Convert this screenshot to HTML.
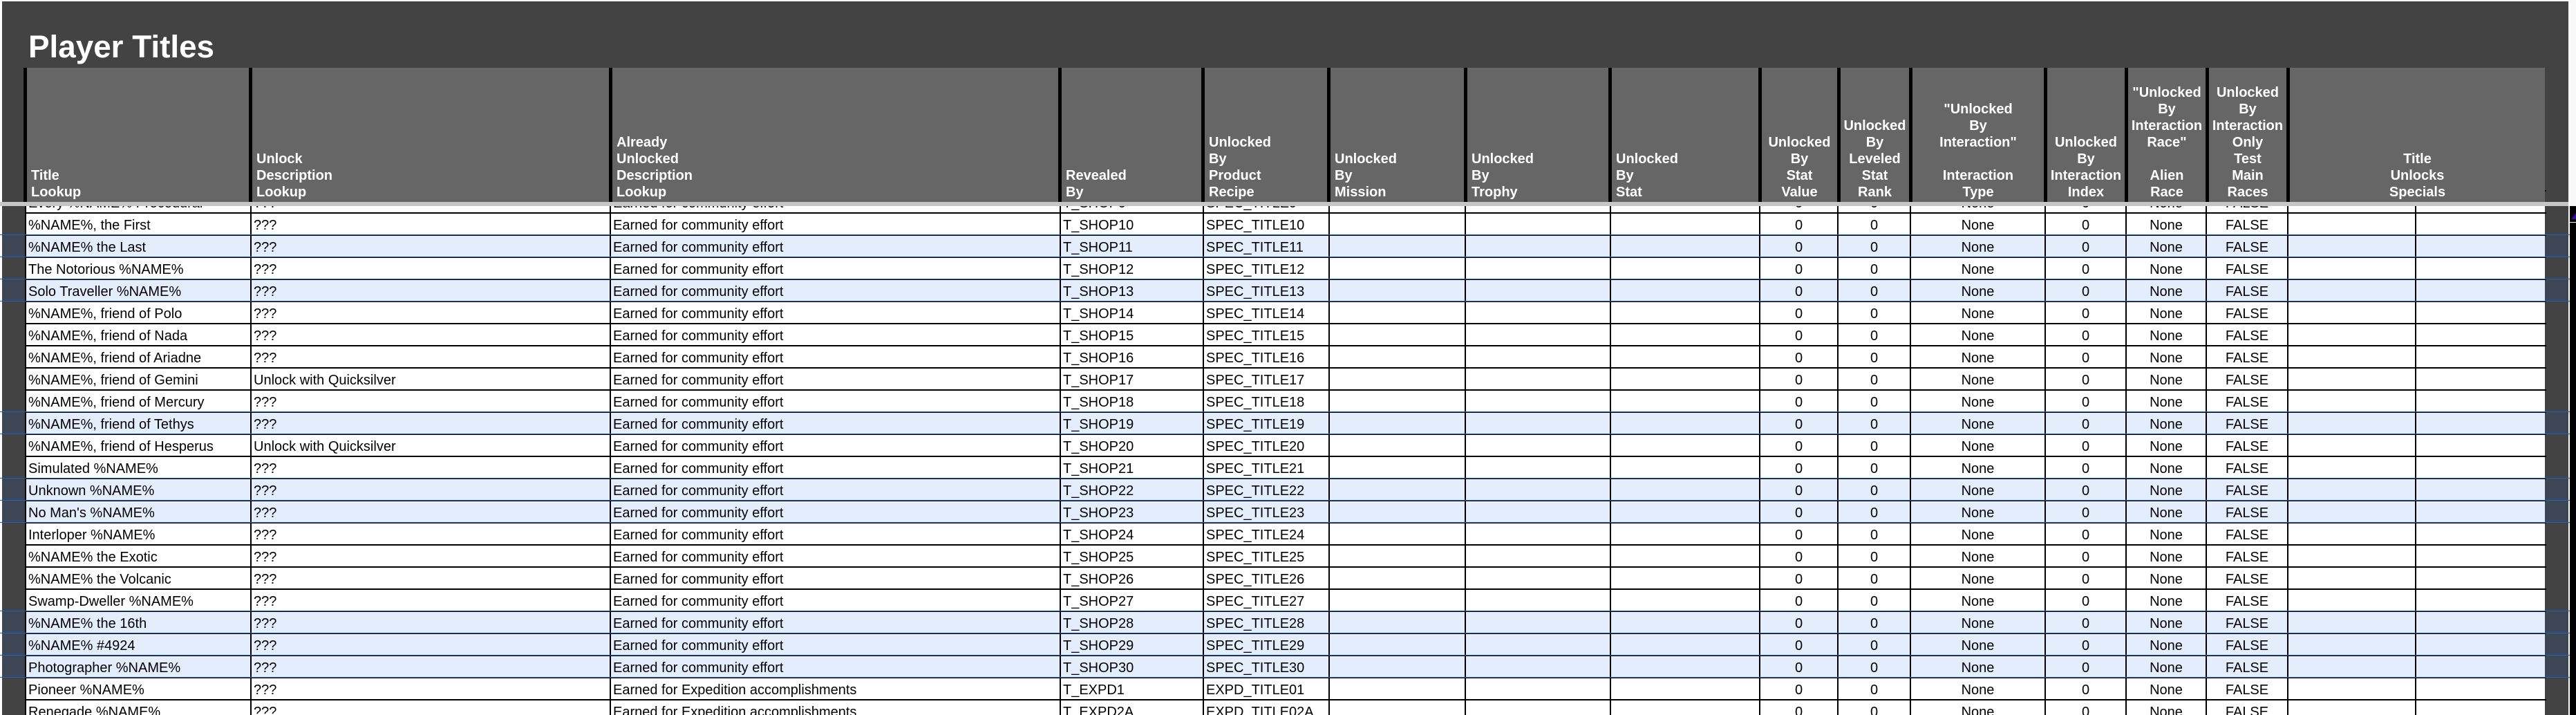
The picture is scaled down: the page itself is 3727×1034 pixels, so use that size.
<!DOCTYPE html>
<html lang="en">
<head>
<meta charset="utf-8">
<title>Player Titles</title>
<style>
html,body{margin:0;padding:0;background:#fff;width:3727px;height:1034px;overflow:hidden;}
#page{position:relative;width:3727px;height:1034px;overflow:hidden;font-family:"Liberation Sans",Arial,sans-serif;font-size:20px;line-height:24px;color:#000;}
.abs{position:absolute;}
#bg{left:3px;top:2px;width:3713px;height:1032px;background:#434343;}
#sb-top{left:3719px;top:0;width:8px;height:298px;background:#f8f8f8;}
#sb{left:3718px;top:298px;width:9px;height:736px;background:#000;}
#sb-sep{left:3718px;top:321px;width:9px;height:1px;background:#fff;}
#tri{left:3718px;top:298px;}
table{border-collapse:separate;border-spacing:0;table-layout:fixed;position:absolute;}
#data{left:36px;top:275px;width:3648px;}
#data td{height:32px;box-sizing:border-box;border-top:2px solid #000;border-left:2px solid #000;background:#fff;vertical-align:bottom;padding:0 0 1px 3px;white-space:nowrap;overflow:hidden;}
#data td:nth-child(n+9):nth-child(-n+14){text-align:center;padding-left:0;}
#data tr.h td{background:#e3edfc;}
#data td:last-child{background:linear-gradient(to right,#fff 186px,#434343 186px);}
#data tr.h td:last-child{background:linear-gradient(to right,#e3edfc 186px,#3e4656 186px);}
.t{left:3px;width:33px;height:32px;background:#3e4656;}
.r{left:3682px;width:34px;height:32px;background:#3e4656;}
.b{left:0;width:3718px;height:1px;background:#1a62cc;}
#head{left:34px;top:98px;width:3648px;}
#head td{height:194px;box-sizing:border-box;background:#666;border-left:5px solid #000;color:#fff;font-weight:bold;vertical-align:bottom;padding:0 0 2px 6px;white-space:nowrap;}
#head td.c{text-align:center;padding-left:0;}
#bar{left:0;top:292px;width:3716px;height:6px;background:#c6c6c6;}
#title{left:41px;top:41px;font-size:45.8px;line-height:54px;font-weight:bold;color:#fff;white-space:nowrap;}
</style>
</head>
<body>
<div id="page">
<div class="abs" id="bg"></div>
<div class="abs" id="sb-top"></div>
<div class="abs" id="sb"></div>
<div class="abs" id="sb-sep"></div>
<svg class="abs" id="tri" width="9" height="23" viewBox="0 0 9 23"><polygon points="2,19 9,10 9,19" fill="#3a0ca3"/></svg>

<div class="abs t" style="top:339px"></div><div class="abs r" style="top:339px"></div>
<div class="abs t" style="top:403px"></div><div class="abs r" style="top:403px"></div>
<div class="abs t" style="top:595px"></div><div class="abs r" style="top:595px"></div>
<div class="abs t" style="top:691px"></div><div class="abs r" style="top:691px"></div>
<div class="abs t" style="top:723px"></div><div class="abs r" style="top:723px"></div>
<div class="abs t" style="top:883px"></div><div class="abs r" style="top:883px"></div>
<div class="abs t" style="top:915px"></div><div class="abs r" style="top:915px"></div>
<div class="abs t" style="top:947px"></div><div class="abs r" style="top:947px"></div>

<table id="data">
<colgroup><col style="width:326px"><col style="width:520px"><col style="width:651px"><col style="width:207px"><col style="width:182px"><col style="width:197px"><col style="width:210px"><col style="width:216px"><col style="width:113px"><col style="width:105px"><col style="width:195px"><col style="width:117px"><col style="width:116px"><col style="width:118px"><col style="width:185px"><col style="width:190px"></colgroup>
<tr><td>Every %NAME% Procedural</td><td>???</td><td>Earned for community effort</td><td>T_SHOP9</td><td>SPEC_TITLE9</td><td></td><td></td><td></td><td>0</td><td>0</td><td>None</td><td>0</td><td>None</td><td>FALSE</td><td></td><td></td></tr>
<tr><td>%NAME%, the First</td><td>???</td><td>Earned for community effort</td><td>T_SHOP10</td><td>SPEC_TITLE10</td><td></td><td></td><td></td><td>0</td><td>0</td><td>None</td><td>0</td><td>None</td><td>FALSE</td><td></td><td></td></tr>
<tr class="h"><td>%NAME% the Last</td><td>???</td><td>Earned for community effort</td><td>T_SHOP11</td><td>SPEC_TITLE11</td><td></td><td></td><td></td><td>0</td><td>0</td><td>None</td><td>0</td><td>None</td><td>FALSE</td><td></td><td></td></tr>
<tr><td>The Notorious %NAME%</td><td>???</td><td>Earned for community effort</td><td>T_SHOP12</td><td>SPEC_TITLE12</td><td></td><td></td><td></td><td>0</td><td>0</td><td>None</td><td>0</td><td>None</td><td>FALSE</td><td></td><td></td></tr>
<tr class="h"><td>Solo Traveller %NAME%</td><td>???</td><td>Earned for community effort</td><td>T_SHOP13</td><td>SPEC_TITLE13</td><td></td><td></td><td></td><td>0</td><td>0</td><td>None</td><td>0</td><td>None</td><td>FALSE</td><td></td><td></td></tr>
<tr><td>%NAME%, friend of Polo</td><td>???</td><td>Earned for community effort</td><td>T_SHOP14</td><td>SPEC_TITLE14</td><td></td><td></td><td></td><td>0</td><td>0</td><td>None</td><td>0</td><td>None</td><td>FALSE</td><td></td><td></td></tr>
<tr><td>%NAME%, friend of Nada</td><td>???</td><td>Earned for community effort</td><td>T_SHOP15</td><td>SPEC_TITLE15</td><td></td><td></td><td></td><td>0</td><td>0</td><td>None</td><td>0</td><td>None</td><td>FALSE</td><td></td><td></td></tr>
<tr><td>%NAME%, friend of Ariadne</td><td>???</td><td>Earned for community effort</td><td>T_SHOP16</td><td>SPEC_TITLE16</td><td></td><td></td><td></td><td>0</td><td>0</td><td>None</td><td>0</td><td>None</td><td>FALSE</td><td></td><td></td></tr>
<tr><td>%NAME%, friend of Gemini</td><td>Unlock with Quicksilver</td><td>Earned for community effort</td><td>T_SHOP17</td><td>SPEC_TITLE17</td><td></td><td></td><td></td><td>0</td><td>0</td><td>None</td><td>0</td><td>None</td><td>FALSE</td><td></td><td></td></tr>
<tr><td>%NAME%, friend of Mercury</td><td>???</td><td>Earned for community effort</td><td>T_SHOP18</td><td>SPEC_TITLE18</td><td></td><td></td><td></td><td>0</td><td>0</td><td>None</td><td>0</td><td>None</td><td>FALSE</td><td></td><td></td></tr>
<tr class="h"><td>%NAME%, friend of Tethys</td><td>???</td><td>Earned for community effort</td><td>T_SHOP19</td><td>SPEC_TITLE19</td><td></td><td></td><td></td><td>0</td><td>0</td><td>None</td><td>0</td><td>None</td><td>FALSE</td><td></td><td></td></tr>
<tr><td>%NAME%, friend of Hesperus</td><td>Unlock with Quicksilver</td><td>Earned for community effort</td><td>T_SHOP20</td><td>SPEC_TITLE20</td><td></td><td></td><td></td><td>0</td><td>0</td><td>None</td><td>0</td><td>None</td><td>FALSE</td><td></td><td></td></tr>
<tr><td>Simulated %NAME%</td><td>???</td><td>Earned for community effort</td><td>T_SHOP21</td><td>SPEC_TITLE21</td><td></td><td></td><td></td><td>0</td><td>0</td><td>None</td><td>0</td><td>None</td><td>FALSE</td><td></td><td></td></tr>
<tr class="h"><td>Unknown %NAME%</td><td>???</td><td>Earned for community effort</td><td>T_SHOP22</td><td>SPEC_TITLE22</td><td></td><td></td><td></td><td>0</td><td>0</td><td>None</td><td>0</td><td>None</td><td>FALSE</td><td></td><td></td></tr>
<tr class="h"><td>No Man's %NAME%</td><td>???</td><td>Earned for community effort</td><td>T_SHOP23</td><td>SPEC_TITLE23</td><td></td><td></td><td></td><td>0</td><td>0</td><td>None</td><td>0</td><td>None</td><td>FALSE</td><td></td><td></td></tr>
<tr><td>Interloper %NAME%</td><td>???</td><td>Earned for community effort</td><td>T_SHOP24</td><td>SPEC_TITLE24</td><td></td><td></td><td></td><td>0</td><td>0</td><td>None</td><td>0</td><td>None</td><td>FALSE</td><td></td><td></td></tr>
<tr><td>%NAME% the Exotic</td><td>???</td><td>Earned for community effort</td><td>T_SHOP25</td><td>SPEC_TITLE25</td><td></td><td></td><td></td><td>0</td><td>0</td><td>None</td><td>0</td><td>None</td><td>FALSE</td><td></td><td></td></tr>
<tr><td>%NAME% the Volcanic</td><td>???</td><td>Earned for community effort</td><td>T_SHOP26</td><td>SPEC_TITLE26</td><td></td><td></td><td></td><td>0</td><td>0</td><td>None</td><td>0</td><td>None</td><td>FALSE</td><td></td><td></td></tr>
<tr><td>Swamp-Dweller %NAME%</td><td>???</td><td>Earned for community effort</td><td>T_SHOP27</td><td>SPEC_TITLE27</td><td></td><td></td><td></td><td>0</td><td>0</td><td>None</td><td>0</td><td>None</td><td>FALSE</td><td></td><td></td></tr>
<tr class="h"><td>%NAME% the 16th</td><td>???</td><td>Earned for community effort</td><td>T_SHOP28</td><td>SPEC_TITLE28</td><td></td><td></td><td></td><td>0</td><td>0</td><td>None</td><td>0</td><td>None</td><td>FALSE</td><td></td><td></td></tr>
<tr class="h"><td>%NAME% #4924</td><td>???</td><td>Earned for community effort</td><td>T_SHOP29</td><td>SPEC_TITLE29</td><td></td><td></td><td></td><td>0</td><td>0</td><td>None</td><td>0</td><td>None</td><td>FALSE</td><td></td><td></td></tr>
<tr class="h"><td>Photographer %NAME%</td><td>???</td><td>Earned for community effort</td><td>T_SHOP30</td><td>SPEC_TITLE30</td><td></td><td></td><td></td><td>0</td><td>0</td><td>None</td><td>0</td><td>None</td><td>FALSE</td><td></td><td></td></tr>
<tr><td>Pioneer %NAME%</td><td>???</td><td>Earned for Expedition accomplishments</td><td>T_EXPD1</td><td>EXPD_TITLE01</td><td></td><td></td><td></td><td>0</td><td>0</td><td>None</td><td>0</td><td>None</td><td>FALSE</td><td></td><td></td></tr>
<tr><td>Renegade %NAME%</td><td>???</td><td>Earned for Expedition accomplishments</td><td>T_EXPD2A</td><td>EXPD_TITLE02A</td><td></td><td></td><td></td><td>0</td><td>0</td><td>None</td><td>0</td><td>None</td><td>FALSE</td><td></td><td></td></tr>
</table>

<div class="abs b" style="top:339px"></div>
<div class="abs b" style="top:371px"></div>
<div class="abs b" style="top:403px"></div>
<div class="abs b" style="top:435px"></div>
<div class="abs b" style="top:595px"></div>
<div class="abs b" style="top:627px"></div>
<div class="abs b" style="top:691px"></div>
<div class="abs b" style="top:723px"></div>
<div class="abs b" style="top:755px"></div>
<div class="abs b" style="top:883px"></div>
<div class="abs b" style="top:915px"></div>
<div class="abs b" style="top:947px"></div>
<div class="abs b" style="top:979px"></div>

<table id="head">
<colgroup><col style="width:326px"><col style="width:521px"><col style="width:650px"><col style="width:207px"><col style="width:182px"><col style="width:198px"><col style="width:209px"><col style="width:217px"><col style="width:114px"><col style="width:104px"><col style="width:195px"><col style="width:117px"><col style="width:117px"><col style="width:117px"><col style="width:374px"></colgroup>
<tr>
<td>Title<br>Lookup</td>
<td>Unlock<br>Description<br>Lookup</td>
<td>Already<br>Unlocked<br>Description<br>Lookup</td>
<td>Revealed<br>By</td>
<td>Unlocked<br>By<br>Product<br>Recipe</td>
<td>Unlocked<br>By<br>Mission</td>
<td>Unlocked<br>By<br>Trophy</td>
<td>Unlocked<br>By<br>Stat</td>
<td class="c">Unlocked<br>By<br>Stat<br>Value</td>
<td class="c">Unlocked<br>By<br>Leveled<br>Stat<br>Rank</td>
<td class="c">"Unlocked<br>By<br>Interaction"<br><br>Interaction<br>Type</td>
<td class="c">Unlocked<br>By<br>Interaction<br>Index</td>
<td class="c">"Unlocked<br>By<br>Interaction<br>Race"<br><br>Alien<br>Race</td>
<td class="c">Unlocked<br>By<br>Interaction<br>Only<br>Test<br>Main<br>Races</td>
<td class="c">Title<br>Unlocks<br>Specials</td>
</tr>
</table>

<div class="abs" id="bar"></div>
<div class="abs" id="title">Player Titles</div>
</div>
</body>
</html>
